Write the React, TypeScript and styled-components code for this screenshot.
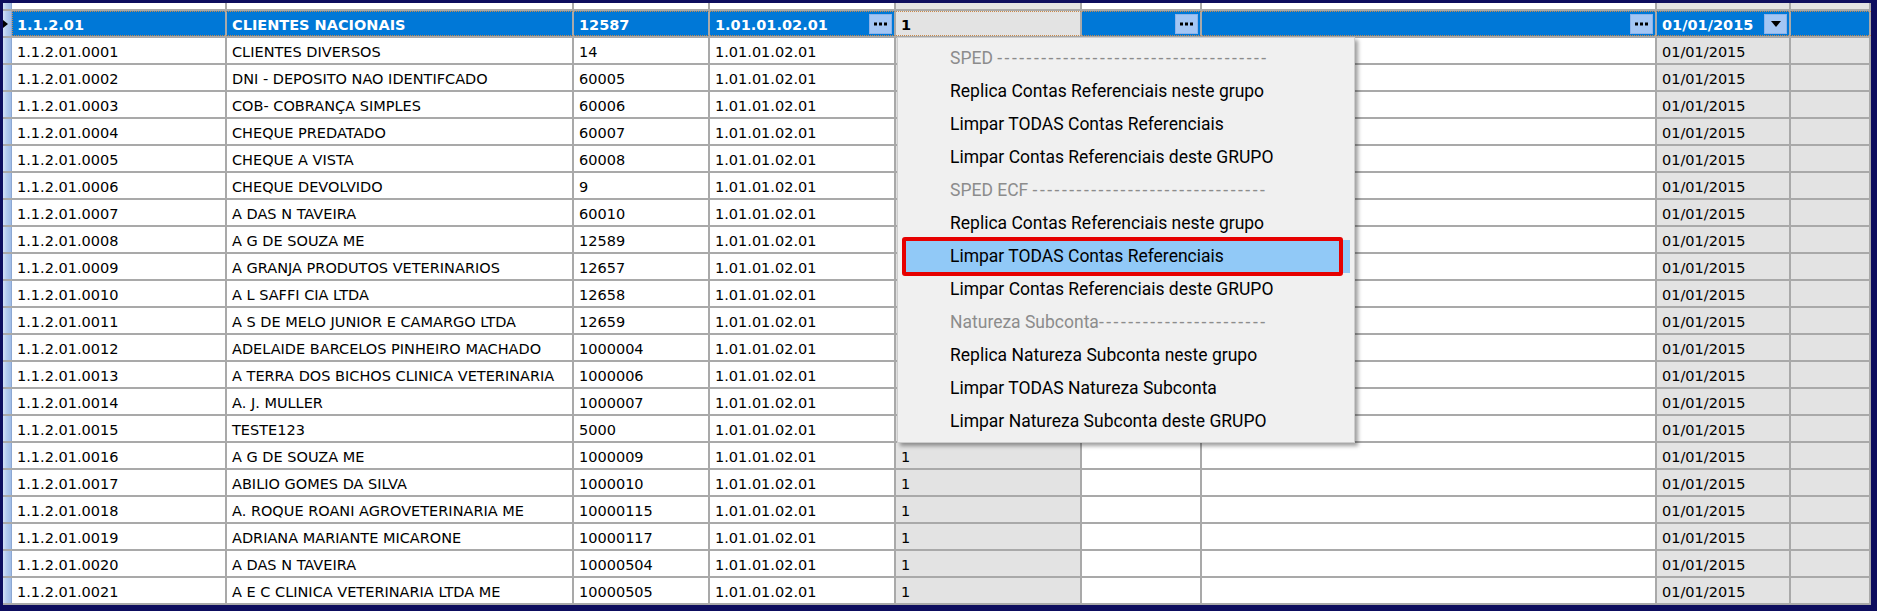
import React from "react";
import styled, { createGlobalStyle, css } from "styled-components";

const GlobalStyle = createGlobalStyle`
  html, body { margin: 0; padding: 0; background: #0d0d5e; }
  body { width: 1877px; height: 611px; overflow: hidden; }
  *, *::before, *::after { box-sizing: border-box; }
`;

const COLS = "9px 215px 347px 136px 186px 186px 120px 455px 134px 80px";
const LINE = "#a9a9a9";

type Tone = "white" | "gray" | "blue";
const toneBg: Record<Tone, string> = { white: "#ffffff", gray: "#e3e3e3", blue: "#0078d7" };

const Frame = styled.div`
  width: 1877px;
  height: 611px;
  background: #0d0d5e;
  padding: 3px 6px 6px 3px;
`;

const Viewport = styled.div`
  position: relative;
  width: 100%;
  height: 100%;
  overflow: hidden;
  background: #ffffff;
  font-family: "DejaVu Sans", Verdana, sans-serif;
  font-size: 14.5px;
  color: #000;
`;

const Table = styled.div`
  display: flex;
  flex-direction: column;
  margin-top: -19px;
`;

const Row = styled.div<{ $selected?: boolean }>`
  position: relative;
  display: grid;
  grid-template-columns: ${COLS};
  height: 27px;
  flex: none;
  border-bottom: 2px solid ${LINE};
  ${(p) =>
    p.$selected &&
    css`
      &::after {
        content: "";
        position: absolute;
        left: 9px;
        right: 0;
        top: 0;
        bottom: 0;
        border-top: 1px dotted #c98a4b;
        border-bottom: 1px dotted #c98a4b;
        border-left: 1px dotted #c98a4b;
        pointer-events: none;
      }
    `}
`;

const Indicator = styled.div`
  display: flex;
  align-items: center;
  background: linear-gradient(to right, #d3e2f6 0%, #b4cbee 45%, #9fbbe6 100%);
  border-right: 1px solid #8da8d2;
`;

const RowMarker = styled.span`
  width: 0;
  height: 0;
  border-left: 5px solid #000;
  border-top: 4.5px solid transparent;
  border-bottom: 4.5px solid transparent;
`;

const Cell = styled.div<{ $tone: Tone; $bold?: boolean }>`
  display: flex;
  align-items: flex-start;
  justify-content: space-between;
  padding: 3px 2px 0 5px;
  line-height: 22px;
  border-right: 2px solid ${LINE};
  background: ${(p) => toneBg[p.$tone]};
  color: ${(p) => (p.$tone === "blue" ? "#ffffff" : "#000000")};
  font-weight: ${(p) => (p.$bold ? 700 : 400)};
  white-space: nowrap;
  overflow: hidden;
`;

const CellButton = styled.span`
  flex: none;
  align-self: center;
  width: 23px;
  height: 20px;
  margin-top: -3px;
  display: flex;
  align-items: center;
  justify-content: center;
  background: #a4c6f4;
  border: 1px solid #8db3ea;
`;

const Menu = styled.div`
  position: absolute;
  left: 894px;
  top: 34px;
  width: 458px;
  padding: 4px 0;
  background: #f0f0f0;
  border: 1px solid #cdcdcd;
  box-shadow: 3px 3px 4px rgba(0, 0, 0, 0.38);
  font-family: Roboto, "Segoe UI", sans-serif;
  font-size: 17.5px;
  color: #000;
`;

const MenuItem = styled.div<{ $disabled?: boolean; $active?: boolean }>`
  position: relative;
  height: 33px;
  line-height: 32px;
  margin: 0 4px 0 5px;
  padding-left: 47px;
  white-space: nowrap;
  color: ${(p) => (p.$disabled ? "#8c8c8c" : "#000")};
  background: ${(p) => (p.$active ? "#91c9f7" : "transparent")};
`;

const Dashes = styled.span`
  letter-spacing: 2.5px;
`;

const Callout = styled.span`
  position: absolute;
  top: -3px;
  bottom: -3px;
  left: -1px;
  right: 7px;
  border: 4px solid #e60000;
  border-radius: 3px;
  pointer-events: none;
`;

const Dots = () => (
  <svg width="13" height="4" viewBox="0 0 13 4">
    <rect x="0" y="0.5" width="3" height="3" fill="#000" />
    <rect x="5" y="0.5" width="3" height="3" fill="#000" />
    <rect x="10" y="0.5" width="3" height="3" fill="#000" />
  </svg>
);

const Caret = () => (
  <svg width="10" height="6" viewBox="0 0 10 6">
    <polygon points="0,0 10,0 5,6" fill="#000" />
  </svg>
);

const rows: [string, string, string][] = [
  ["1.1.2.01.0001", "CLIENTES DIVERSOS", "14"],
  ["1.1.2.01.0002", "DNI - DEPOSITO NAO IDENTIFCADO", "60005"],
  ["1.1.2.01.0003", "COB- COBRANÇA SIMPLES", "60006"],
  ["1.1.2.01.0004", "CHEQUE PREDATADO", "60007"],
  ["1.1.2.01.0005", "CHEQUE A VISTA", "60008"],
  ["1.1.2.01.0006", "CHEQUE DEVOLVIDO", "9"],
  ["1.1.2.01.0007", "A DAS N TAVEIRA", "60010"],
  ["1.1.2.01.0008", "A G DE SOUZA ME", "12589"],
  ["1.1.2.01.0009", "A GRANJA PRODUTOS VETERINARIOS", "12657"],
  ["1.1.2.01.0010", "A L SAFFI CIA LTDA", "12658"],
  ["1.1.2.01.0011", "A S DE MELO JUNIOR E CAMARGO LTDA", "12659"],
  ["1.1.2.01.0012", "ADELAIDE BARCELOS PINHEIRO MACHADO", "1000004"],
  ["1.1.2.01.0013", "A TERRA DOS BICHOS CLINICA VETERINARIA", "1000006"],
  ["1.1.2.01.0014", "A. J. MULLER", "1000007"],
  ["1.1.2.01.0015", "TESTE123", "5000"],
  ["1.1.2.01.0016", "A G DE SOUZA ME", "1000009"],
  ["1.1.2.01.0017", "ABILIO GOMES DA SILVA", "1000010"],
  ["1.1.2.01.0018", "A. ROQUE ROANI AGROVETERINARIA ME", "10000115"],
  ["1.1.2.01.0019", "ADRIANA MARIANTE MICARONE", "10000117"],
  ["1.1.2.01.0020", "A DAS N TAVEIRA", "10000504"],
  ["1.1.2.01.0021", "A E C CLINICA VETERINARIA LTDA ME", "10000505"],
];

type Entry = { label: string; dashes?: number; disabled?: boolean; active?: boolean };
const menu: Entry[] = [
  { label: "SPED ", dashes: 37, disabled: true },
  { label: "Replica Contas Referenciais neste grupo" },
  { label: "Limpar TODAS Contas Referenciais" },
  { label: "Limpar Contas Referenciais deste GRUPO" },
  { label: "SPED ECF ", dashes: 32, disabled: true },
  { label: "Replica Contas Referenciais neste grupo" },
  { label: "Limpar TODAS Contas Referenciais", active: true },
  { label: "Limpar Contas Referenciais deste GRUPO" },
  { label: "Natureza Subconta", dashes: 23, disabled: true },
  { label: "Replica Natureza Subconta neste grupo" },
  { label: "Limpar TODAS Natureza Subconta" },
  { label: "Limpar Natureza Subconta deste GRUPO" },
];

const DataRow = ({ code, name, num, bold }: { code: string; name: string; num: string; bold?: boolean }) => (
  <Row>
    <Indicator />
    <Cell $tone="white" $bold={bold}>{code}</Cell>
    <Cell $tone="white" $bold={bold}>{name}</Cell>
    <Cell $tone="white" $bold={bold}>{num}</Cell>
    <Cell $tone="white">{bold ? "" : "1.01.01.02.01"}</Cell>
    <Cell $tone="gray">{bold ? "" : "1"}</Cell>
    <Cell $tone="white" />
    <Cell $tone="white" />
    <Cell $tone="gray">{bold ? "" : "01/01/2015"}</Cell>
    <Cell $tone="gray" />
  </Row>
);

export default function App() {
  return (
    <>
      <GlobalStyle />
      <Frame>
        <Viewport>
          <Table>
            <DataRow code="1.1.2" name="CLIENTES NACIONAIS VETERINARIOS" num="12" bold />
            <Row $selected>
              <Indicator>
                <RowMarker />
              </Indicator>
              <Cell $tone="blue" $bold>1.1.2.01</Cell>
              <Cell $tone="blue" $bold>CLIENTES NACIONAIS</Cell>
              <Cell $tone="blue" $bold>12587</Cell>
              <Cell $tone="blue" $bold>
                1.01.01.02.01
                <CellButton><Dots /></CellButton>
              </Cell>
              <Cell $tone="gray" $bold>1</Cell>
              <Cell $tone="blue">
                <span />
                <CellButton><Dots /></CellButton>
              </Cell>
              <Cell $tone="blue">
                <span />
                <CellButton><Dots /></CellButton>
              </Cell>
              <Cell $tone="blue" $bold>
                01/01/2015
                <CellButton><Caret /></CellButton>
              </Cell>
              <Cell $tone="blue" />
            </Row>
            {rows.map(([c, n, v]) => (
              <DataRow key={c} code={c} name={n} num={v} />
            ))}
          </Table>
          <Menu>
            {menu.map((m, i) => (
              <MenuItem key={i} $disabled={m.disabled} $active={m.active}>
                {m.label}
                {m.dashes ? <Dashes>{"-".repeat(m.dashes)}</Dashes> : null}
                {m.active ? <Callout /> : null}
              </MenuItem>
            ))}
          </Menu>
        </Viewport>
      </Frame>
    </>
  );
}
